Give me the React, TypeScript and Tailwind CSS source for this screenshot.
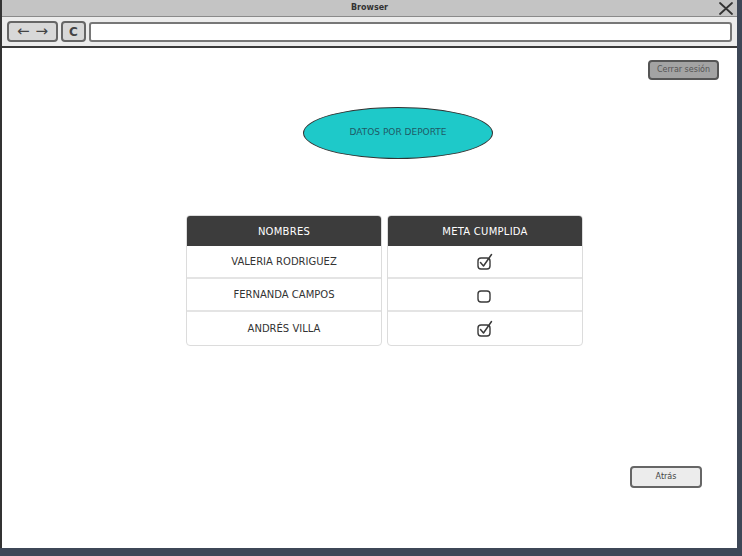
import { ReactNode } from 'react';

const font = { fontFamily: '"DejaVu Sans", "Liberation Sans", sans-serif' };

const Check = ({ checked }: { checked: boolean }) => (
  <svg width="18" height="18" viewBox="0 0 18 18" fill="none">
    <rect x="2" y="5" width="12" height="11" rx="3" stroke="#3a3a3a" strokeWidth="1.4" />
    {checked && (
      <path d="M4.5 9.5 L7.5 13 L15.5 1.5" stroke="#3a3a3a" strokeWidth="1.5" strokeLinecap="round" strokeLinejoin="round" />
    )}
  </svg>
);

const Column = ({ title, children }: { title: string; children: ReactNode }) => (
  <div className="w-[196px] rounded-[4px] border border-[#dcdcdc] overflow-hidden bg-white">
    <div className="h-[30px] bg-[#3c3c3c] text-white text-[10px] flex items-center justify-center tracking-wide">
      {title}
    </div>
    {children}
  </div>
);

const Cell = ({ children, last }: { children: ReactNode; last?: boolean }) => (
  <div
    className={`h-[33px] flex items-center justify-center text-[10px] text-[#333] ${
      last ? '' : 'border-b-2 border-[#e4e4e4]'
    }`}
  >
    {children}
  </div>
);

export default function App() {
  const rows = [
    { name: 'VALERIA RODRIGUEZ', done: true },
    { name: 'FERNANDA CAMPOS', done: false },
    { name: 'ANDRÉS VILLA', done: true },
  ];

  return (
    <div className="w-[742px] h-[556px] flex flex-col bg-[#3d4757] overflow-hidden" style={font}>
      <div className="flex-1 flex flex-col border-l-2 border-[#333] mr-[5px] bg-white">
        {/* title bar */}
        <div className="h-[17px] bg-[#c4c4c4] border-b border-[#8a8a8a] relative flex items-center justify-center">
          <span className="text-[8px] font-bold text-[#333]">Browser</span>
          <svg className="absolute right-[4px] top-[2px]" width="14" height="13" viewBox="0 0 14 13">
            <path d="M1 1 L13 12 M13 1 L1 12" stroke="#333" strokeWidth="1.8" strokeLinecap="round" />
          </svg>
        </div>
        {/* toolbar */}
        <div className="h-[31px] bg-[#ececec] border-b-2 border-[#3a3a3a] flex items-center gap-[3px] pl-[5px] pr-[5px]">
          <div className="w-[51px] h-[21px] rounded-[4px] border-2 border-[#666] bg-[#d8d8d8] flex items-center justify-center gap-[6px] text-[#444] text-[15px] leading-none">
            <span>←</span>
            <span>→</span>
          </div>
          <div className="w-[25px] h-[21px] rounded-[4px] border-2 border-[#666] bg-[#d8d8d8] flex items-center justify-center text-[#444] text-[12px] font-bold">
            C
          </div>
          <div className="flex-1 h-[20px] rounded-[3px] border-2 border-[#777] bg-white" />
        </div>
        {/* content */}
        <div className="flex-1 flex flex-col">
          <div className="flex justify-end pr-[18px] pt-[12px]">
            <div className="w-[71px] h-[20px] rounded-[4px] border-2 border-[#555] bg-[#a3a3a3] flex items-center justify-center text-[8px] text-[#555]">
              Cerrar sesión
            </div>
          </div>
          <div className="ml-[301px] mt-[27px] w-[190px] h-[52px] rounded-[50%] border border-[#333] bg-[#1ec9c9] flex items-center justify-center text-[9px] text-[#1e5a66]">
            DATOS POR DEPORTE
          </div>
          <div className="ml-[184px] mt-[56px] flex gap-[5px]">
            <Column title="NOMBRES">
              {rows.map((r, i) => (
                <Cell key={r.name} last={i === rows.length - 1}>
                  {r.name}
                </Cell>
              ))}
            </Column>
            <Column title="META CUMPLIDA">
              {rows.map((r, i) => (
                <Cell key={r.name} last={i === rows.length - 1}>
                  <Check checked={r.done} />
                </Cell>
              ))}
            </Column>
          </div>
          <div className="flex justify-end pr-[35px] mt-[120px]">
            <div className="w-[72px] h-[22px] rounded-[4px] border-2 border-[#666] bg-[#ececec] flex items-center justify-center text-[8px] text-[#444]">
              Atrás
            </div>
          </div>
        </div>
      </div>
      <div className="h-[8px]" />
    </div>
  );
}
